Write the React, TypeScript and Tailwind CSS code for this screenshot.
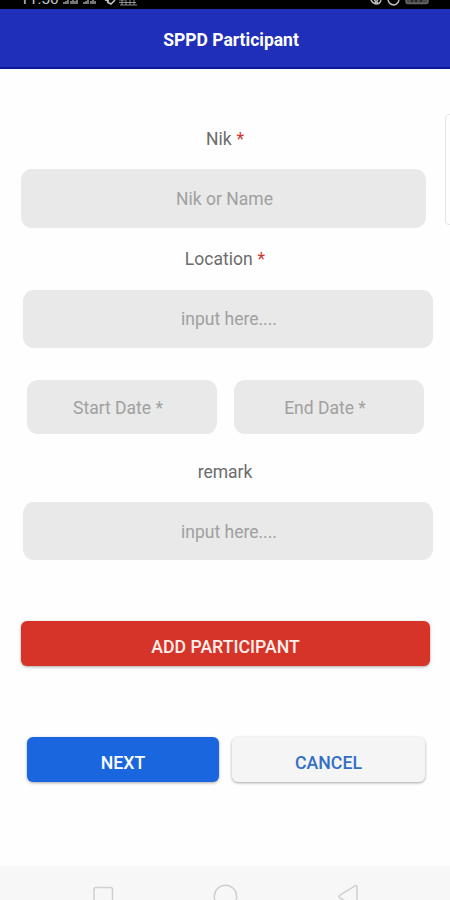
import React from 'react';

function Label({ text, required }: { text: string; required?: boolean }) {
  return (
    <div className="flex h-full items-center justify-center gap-[5px] text-[#6c6c6c]">
      <span>{text}</span>
      {required && <span className="text-[#d0352c]">*</span>}
    </div>
  );
}

function StatusBar() {
  return (
    <div className="flex h-[9px] shrink-0 items-end overflow-hidden bg-black pr-[20px] pl-[20px] text-[#c4c4c4]">
      <span className="mb-[2px] w-[38px] text-[15.5px] leading-[15px] whitespace-nowrap">11:50</span>
      <svg className="ml-[4px] h-[9px] w-[76px]" viewBox="0 0 76 9" fill="none" stroke="currentColor">
        <path d="M2 4V2M4 4V1M6 4V0M9 4V1M11 4V0M13 4V1M15 4V0M22 4V2M24 4V1M26 4V0M29 4V1M31 4V0M33 4V1" strokeWidth="1.2" />
        <path d="M43 0L47 1M45 2L49 4L53 0" strokeWidth="1.5" />
        <path d="M57 0H63M57 2.5H74M58 5H75M60 0V5M64 0V5M68 0V5M72 0V5" strokeWidth="1" strokeOpacity="0.7" />
      </svg>
      <svg className="ml-auto h-[9px] w-[62px]" viewBox="0 0 62 9" fill="none" stroke="currentColor" strokeWidth="1.4">
        <path d="M3 0Q4 3 8 4Q12 4 13 0M6 0L11 4M10 0L7 3" />
        <path d="M20 0Q21 4.5 26 5Q30 4 31 0" />
        <rect x="38" y="-5" width="22" height="8.5" rx="2" fill="#4c4c4c" stroke="#666666" />
        <path d="M44 0V2M48 0V2M53 0V2" stroke="#161616" />
      </svg>
    </div>
  );
}

const field = 'flex items-center justify-center rounded-[11px] bg-[#e9e9e9] text-[#a0a0a0]';
const button = 'flex h-[45px] items-center justify-center rounded-[6px] pt-[7px] text-[17.7px] font-medium shadow-[0_1px_3px_rgba(0,0,0,0.35)]';

export default function App() {
  return (
    <div className="relative flex h-[900px] w-[450px] flex-col overflow-hidden bg-[#fefefe] font-['Roboto',sans-serif] text-[17.5px] leading-5">
      <StatusBar />
      <header className="flex h-[60px] shrink-0 items-center justify-center border-b-2 border-[#091a9c] bg-[#202fba] pt-[4px] pl-[12px] text-[17.5px] font-bold text-white">
        SPPD Participant
      </header>
      <main className="flex flex-1 flex-col">
        <div className="mt-[49px] h-[41px]"><Label text="Nik" required /></div>
        <div className={`${field} mt-[10px] mr-[24px] ml-[21px] h-[59px] pl-[2px]`}>Nik or Name</div>
        <div className="mt-[10px] h-[41px]"><Label text="Location" required /></div>
        <div className={`${field} mt-[11px] mr-[17px] ml-[23px] h-[58px] pl-[2px]`}>input here....</div>
        <div className="mt-[32px] mr-[26px] ml-[27px] flex h-[54px] gap-[17px]">
          <div className={`${field} w-[190px] pt-[2px] pr-[8px]`}>Start Date *</div>
          <div className={`${field} flex-1 pt-[2px] pr-[8px]`}>End Date *</div>
        </div>
        <div className="mt-[17px] h-[41px]"><Label text="remark" /></div>
        <div className={`${field} mt-[10px] mr-[17px] ml-[23px] h-[58px] pt-[2px] pl-[2px]`}>input here....</div>
        <button className={`${button} mt-[61px] mr-[20px] ml-[21px] bg-[#d63329] text-[#fff0e9]`}>ADD PARTICIPANT</button>
        <div className="mt-[71px] mr-[25px] ml-[27px] flex gap-[13px]">
          <button className={`${button} w-[192px] bg-[#1966df] text-white`}>NEXT</button>
          <button className={`${button} flex-1 bg-[#f5f5f5] text-[#3270c5]`}>CANCEL</button>
        </div>
      </main>
      <nav className="h-[34px] shrink-0 bg-[#f7f7f7]">
        <svg className="h-[34px] w-[450px]" viewBox="0 0 450 34" fill="none" stroke="#cfcfcf" strokeWidth="1.5">
          <rect x="94" y="21.5" width="18.5" height="19" rx="2" />
          <circle cx="225.5" cy="30.5" r="11.2" />
          <path d="M355 19.8L340 29.2Q338 30.5 340 31.8L355 41Q357 42 357 40V21Q357 19 355 19.8Z" />
        </svg>
      </nav>
      <div className="absolute top-[114px] -right-[10px] h-[111px] w-[15px] rounded-[4px] border border-[#e4e4e4]" />
    </div>
  );
}
